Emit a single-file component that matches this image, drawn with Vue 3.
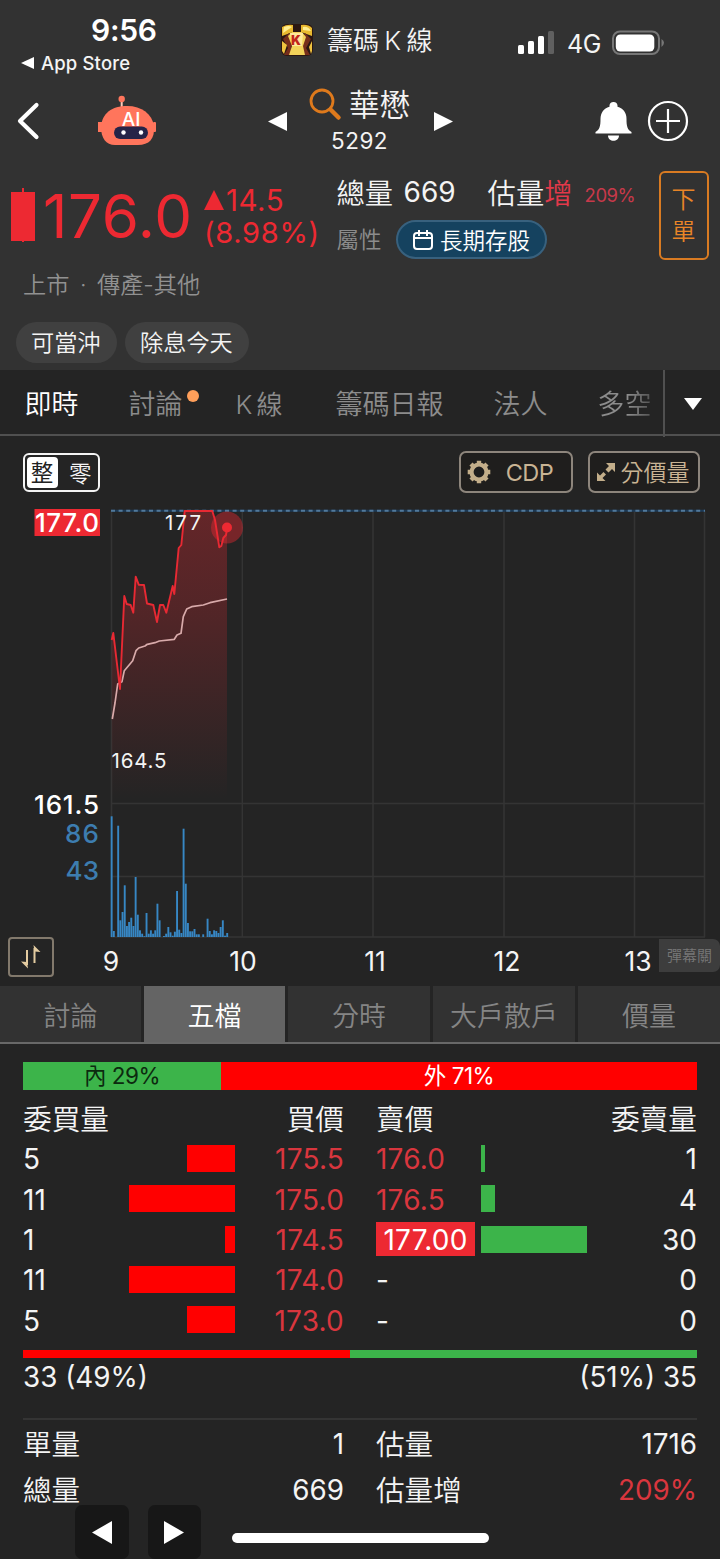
<script setup>
const tabs = [
  { label: '即時', active: true },
  { label: '討論', dot: true },
  { label: 'K 線', latin: true },
  { label: '籌碼日報' },
  { label: '法人' },
  { label: '多空', fade: true },
]

const subTabs = ['討論', '五檔', '分時', '大戶散戶', '價量']

const bids = [
  { qty: 5, price: '175.5', bar: 48 },
  { qty: 11, price: '175.0', bar: 106 },
  { qty: 1, price: '174.5', bar: 10 },
  { qty: 11, price: '174.0', bar: 106 },
  { qty: 5, price: '173.0', bar: 48 },
]

const asks = [
  { qty: 1, price: '176.0', bar: 4 },
  { qty: 4, price: '176.5', bar: 14 },
  { qty: 30, price: '177.00', bar: 106, limit: true },
  { qty: 0, price: '-', bar: 0 },
  { qty: 0, price: '-', bar: 0 },
]

const hours = [
  { x: 111, label: '9' },
  { x: 243, label: '10' },
  { x: 375, label: '11' },
  { x: 507, label: '12' },
  { x: 638, label: '13' },
]

const gridX = [111.5, 242.3, 373, 504, 634.5, 704.5]

const pricePoints = '111.7,640 113.3,633 120,689 124.3,596 126.7,604 130.7,605 133.3,612.7 135.7,576.7 138.7,584.7 144,585 147,603.5 153.3,605 157,622 160,605 163.3,605 166.3,612.7 172.7,586 174.3,594 178.7,548 181.3,545 184.7,511 212.3,511 215,520 219.3,547.3 221.3,546 223.3,538 226,535 227,528'
const averagePoints = '112.3,719 115,703 117.7,684 122,681.7 124.3,670.7 132.7,660.7 136,650.7 138.7,648 145,646 147.3,644.3 155,642.7 159.3,641 174.3,639.3 177,635 181,633.3 183.3,616.7 186.7,609 191.7,606.7 203.3,605 210,602.7 227,599'

// One entry per minute since the open, in pixels.
const volumes = [
  120.7, 6, 0, 111.3, 16.7, 25, 51.7, 11, 15, 19.3, 11, 60, 22.3, 6.7, 3.3, 0.8, 24, 3.3, 6.7, 3.3,
  6.7, 33.3, 16.7, 0, 1, 3.3, 10, 4.7, 1.3, 5.3, 46, 7.3, 4, 108.3, 53.3, 14, 5.7, 5.7, 8, 2.7,
  2.7, 0, 2.7, 0, 18.3, 6, 2.7, 6.7, 6, 4, 10, 16.7, 1.3, 4,
]
</script>

<template>
  <main class="screen">
    <header class="top">
      <section class="status">
        <div class="clock">
          <b>9:56</b>
          <span class="back-app">
            <svg width="13" height="12" viewBox="0 0 13 12"><path d="M0 6 13 0v12z" fill="#fff" /></svg>
            App Store
          </span>
        </div>
        <div class="app-name">
          <svg width="32" height="32" viewBox="0 0 32 32">
            <rect width="32" height="32" rx="6" fill="#2b1712" />
            <path d="M1 3Q6 0 12 1v7L1 12zM20 1q7-1 11 3v8l-11-4z" fill="#e9b92f" />
            <path d="M3 3q5-2 8 0L2 9zM22 3q5-1 8 4l-8-1z" fill="#ffee91" />
            <path d="M2 15l6-6 3 8-1 14H3l4-7zM30 15l-6-6-3 8 1 14h7l-4-7z" fill="#762e1b" />
            <path d="M7 12l4-4h10l4 5-3 9 2 9H8l3-9z" fill="#f3d35a" />
            <path d="M9 9h13l-1 13H11z" fill="#ffe99a" />
            <path d="M1 17l5 4-3 9-2-3zM31 17l-3 6 2 7 1-3z" fill="#f0c33f" />
            <text x="15" y="21" text-anchor="middle" class="icon-k">K</text>
          </svg>
          <span>籌碼 K 線</span>
        </div>
        <div class="signals">
          <svg width="37" height="24" viewBox="0 0 37 24">
            <rect x="0" y="14" width="6" height="9" rx="1.500" fill="#fff" />
            <rect x="10" y="10" width="6" height="13" rx="1.500" fill="#fff" />
            <rect x="20" y="5" width="6" height="18" rx="1.500" fill="#fff" />
            <rect x="30" y="0" width="6" height="23" rx="1.500" fill="#606060" />
          </svg>
          <span>4G</span>
          <svg width="53" height="26" viewBox="0 0 53 26">
            <rect x="1" y="1.500" width="46" height="22.500" rx="7" fill="none" stroke="#777" stroke-width="2" />
            <rect x="3.800" y="4.500" width="38.500" height="17" rx="4.500" fill="#fff" />
            <path d="M49.500 9q5 3.500 0 8z" fill="#777" />
          </svg>
        </div>
      </section>

      <section class="nav">
        <svg class="chevron" width="24" height="40" viewBox="0 0 24 40">
          <path d="M20.500 4 4 20l16.500 16" fill="none" stroke="#fff" stroke-width="4.200" stroke-linecap="round" stroke-linejoin="round" />
        </svg>
        <svg class="robot" width="58" height="52" viewBox="0 0 58 52">
          <path d="M23.700 5v9" stroke="#ffc9b7" stroke-width="2" />
          <circle cx="23.700" cy="4" r="3.200" fill="#ff755c" />
          <rect x="0" y="27" width="6" height="10" fill="#ff755c" />
          <rect x="55" y="27" width="3" height="10" rx="1" fill="#ff755c" />
          <path d="M3 32C4 18 14 11 29 11s25 8 27 20c1 13-5 19-16 19H17C8 50 3 43 3 32z" fill="#ff755c" />
          <rect x="16" y="31.500" width="34" height="12.500" rx="6.200" fill="#252448" />
          <circle cx="25.500" cy="37.500" r="2.200" fill="#fff" />
          <circle cx="43" cy="37.500" r="2.200" fill="#fff" />
          <text x="33" y="30.500" text-anchor="middle" class="robot-text">AI</text>
        </svg>
        <svg class="prev" width="19" height="19" viewBox="0 0 19 19"><path d="M0 9.500 19 0v19z" fill="#fff" /></svg>
        <div class="stock">
          <div class="stock-name">
            <svg width="34" height="34" viewBox="0 0 34 34">
              <circle cx="13" cy="13" r="11" fill="none" stroke="#df7a1c" stroke-width="2.800" />
              <path d="m21.500 21.500 8 8" stroke="#df7a1c" stroke-width="4.500" stroke-linecap="round" />
            </svg>
            <span>華懋</span>
          </div>
          <div class="stock-code">5292</div>
        </div>
        <svg class="next" width="19" height="19" viewBox="0 0 19 19"><path d="M19 9.500 0 0v19z" fill="#fff" /></svg>
        <svg class="bell" width="37" height="40" viewBox="0 0 37 40">
          <path d="M18.500 1c-2.500 0-4 1.600-4 3.600v1.200C8.500 7.500 5.500 12 5.500 18c0 7-.8 10.500-5 13v1.500h36V31c-4.200-2.500-5-6-5-13 0-6-3-10.500-9-12.200V4.600c0-2-1.500-3.600-4-3.600zM13 34.500h11c0 7-11 7-11 0z" fill="#fff" />
        </svg>
        <svg class="plus" width="42" height="42" viewBox="0 0 42 42">
          <circle cx="21" cy="21" r="19" fill="none" stroke="#fff" stroke-width="2.200" />
          <path d="M21 9v24M9 21h24" stroke="#fff" stroke-width="2.200" />
        </svg>
      </section>

      <section class="quote">
        <div class="price-block">
          <div class="price-line">
            <svg width="25" height="56" viewBox="0 0 25 56"><path d="M0 5h24v49H0zM11 1h2v54h-2z" fill="#ed2932" /></svg>
            <span class="last">176.0</span>
            <div class="change">
              <div class="change-top">
                <svg width="20" height="20" viewBox="0 0 20 20"><path d="M10 0 20 20H0z" fill="#ed2932" /></svg>
                <span>14.5</span>
              </div>
              <div class="change-pct">(8.98%)</div>
            </div>
          </div>
          <div class="market">上市 <i>·</i> 傳產-其他</div>
        </div>
        <div class="volume-block">
          <div class="volume-line">
            <span>總量</span><span class="num">669</span><span class="est">估量<em>增</em></span><small>209%</small>
          </div>
          <div class="attr-line">
            <span>屬性</span>
            <div class="pill">
              <svg width="20" height="20" viewBox="0 0 20 20" fill="none" stroke="#fff" stroke-width="2">
                <rect x="1" y="3" width="18" height="16" rx="3" /><path d="M1 8h18M6 0v6M14 0v6" />
              </svg>
              <span>長期存股</span>
            </div>
          </div>
        </div>
        <button class="order"><span>下</span><span>單</span></button>
      </section>

      <div class="tags"><span>可當沖</span><span>除息今天</span></div>
    </header>

    <nav class="tabs">
      <span v-for="t in tabs" :key="t.label" :class="{ active: t.active, fade: t.fade, latin: t.latin }">{{ t.label }}<i v-if="t.dot" class="dot"></i></span>
      <div class="more"><svg width="18" height="12" viewBox="0 0 18 12"><path d="M0 0h18L9 12z" fill="#fff" /></svg></div>
    </nav>

    <section class="chart">
      <div class="controls">
        <div class="lot"><b>整</b><span>零</span></div>
        <button class="tool cdp">
          <svg width="24" height="24" viewBox="0 0 24 24">
            <circle cx="12" cy="12" r="7.500" fill="none" stroke="#c3ae8a" stroke-width="4.200" />
            <path d="M12 .7v4M12 19.300v4M.7 12h4M19.300 12h4M4 4l3 3M17 17l3 3M20 4l-3 3M7 17l-3 3" stroke="#c3ae8a" stroke-width="4.400" />
          </svg>
          <span>CDP</span>
        </button>
        <button class="tool split">
          <svg width="20" height="20" viewBox="0 0 20 20">
            <path d="M10 1h9v9l-3-3-3.500 3.500-3-3L13 4zM1 10.500l3 3L7.500 10l2.500 2.500L6.500 16l3 3H1z" fill="#c3ae8a" />
          </svg>
          <span>分價量</span>
        </button>
      </div>

      <svg class="plot" width="720" height="486" viewBox="0 500 720 486">
        <defs>
          <linearGradient id="area" x1="0" y1="511" x2="0" y2="800" gradientUnits="userSpaceOnUse">
            <stop offset="0" stop-color="#ed2932" stop-opacity=".32" />
            <stop offset=".35" stop-color="#ed2932" stop-opacity=".23" />
            <stop offset="1" stop-color="#ed2932" stop-opacity="0" />
          </linearGradient>
        </defs>
        <g stroke="#343434" stroke-width="1.500">
          <path v-for="x in gridX" :key="x" :d="`M${x} 511V937`" />
          <path d="M111 803.500h594M111 876.500h594M111 937h594" />
        </g>
        <path d="M111 510.800h594" stroke="#1c3a56" stroke-width="2" />
        <path d="M111 510.800h594" stroke="#52799b" stroke-width="2" stroke-dasharray="4 3.600" />
        <polygon :points="`111.700,800 ${pricePoints} 227,800`" fill="url(#area)" />
        <polyline :points="averagePoints" fill="none" stroke="#d8aaaa" stroke-width="1.700" stroke-linejoin="round" />
        <polyline :points="pricePoints" fill="none" stroke="#e82933" stroke-width="1.900" stroke-linejoin="round" />
        <circle cx="227" cy="527.500" r="16" fill="#ed2932" fill-opacity=".42" />
        <circle cx="227" cy="527.500" r="5" fill="#ed2932" />
        <g fill="#3787c4">
          <rect v-for="(v, i) in volumes" :key="i" :x="110.700 + i * 2.180" :y="937 - v" width="1.900" :height="v" />
        </g>
        <rect x="34.500" y="509" width="65.500" height="27" fill="#ed2932" />
        <g class="axis" text-anchor="end">
          <text x="99" y="532" textLength="64">177.0</text>
          <text x="99" y="813.500" textLength="65">161.5</text>
          <text x="99" y="842.500" textLength="34" fill="#3d7db0">86</text>
          <text x="99" y="880" textLength="33.500" fill="#3d7db0">43</text>
        </g>
        <g class="marks">
          <text x="165" y="529.500" textLength="36">177</text>
          <text x="111.500" y="767.500" textLength="55">164.5</text>
        </g>
        <g class="hours" text-anchor="middle">
          <text v-for="h in hours" :key="h.label" :x="h.x" y="970.500">{{ h.label }}</text>
        </g>
      </svg>
      <button class="swap">
        <svg width="22" height="24" viewBox="0 0 22 24" fill="none" stroke="#e3cba0" stroke-width="2">
          <path d="M7 5v15M14.500 18V3" /><path d="M8 23.500 1 16.500l6 .5zM13.500 0 20.500 7l-6-.5z" fill="#e3cba0" stroke="none" />
        </svg>
      </button>
      <span class="danmu">彈幕關</span>
    </section>

    <nav class="sub-tabs">
      <span v-for="(t, i) in subTabs" :key="t" :class="{ active: i === 1 }">{{ t }}</span>
    </nav>

    <section class="book">
      <div class="ratio"><div class="inner">內 29%</div><div class="outer">外 71%</div></div>
      <div class="depth">
        <div class="side bid">
          <div class="row cjk"><span>委買量</span><span>買價</span></div>
          <div v-for="(b, i) in bids" :key="i" class="row">
            <span class="qty">{{ b.qty }}</span>
            <div class="track"><i :style="{ width: b.bar + 'px' }"></i></div>
            <span class="px">{{ b.price }}</span>
          </div>
        </div>
        <div class="side ask">
          <div class="row cjk"><span>賣價</span><span>委賣量</span></div>
          <div v-for="(a, i) in asks" :key="i" class="row">
            <span class="px" :class="{ limit: a.limit, none: a.price === '-' }">{{ a.price }}</span>
            <div class="track"><i :style="{ width: a.bar + 'px' }"></i></div>
            <span class="qty">{{ a.qty }}</span>
          </div>
        </div>
      </div>
      <div class="total-bar"><i></i><b></b></div>
      <div class="totals"><span>33 (49%)</span><span>(51%) 35</span></div>
      <div class="stats">
        <div><span>單量</span><b>1</b></div>
        <div><span>估量</span><b>1716</b></div>
        <div><span>總量</span><b>669</b></div>
        <div><span>估量增</span><b class="red">209%</b></div>
      </div>
    </section>

    <footer class="bottom">
      <button><svg width="20" height="23" viewBox="0 0 20 23"><path d="M0 11.500 20 0v23z" fill="#fff" /></svg></button>
      <button><svg width="20" height="23" viewBox="0 0 20 23"><path d="M20 11.500 0 0v23z" fill="#fff" /></svg></button>
      <i class="home"></i>
    </footer>
  </main>
</template>

<style>
body { background: #242424; }
</style>

<style scoped>
* { box-sizing: border-box; }
.screen {
  width: 720px; height: 1559px; overflow: hidden; display: flex; flex-direction: column;
  background: #242424; color: #f4f4f4; font-family: Inter, "Noto Sans CJK TC", sans-serif;
  font-weight: 400; white-space: nowrap;
}
button { padding: 0; border: 0; background: none; color: inherit; font: inherit; }
i, em { font-style: normal; }
svg { display: block; flex: none; }
.top { height: 370px; background: #323232; flex: none; }
.app-name, .stock-name, .market, .volume-line, .attr-line, .order, .tags, .tabs, .lot, .split, .danmu, .sub-tabs, .row.cjk, .stats span { font-weight: 350; }

.status { height: 80px; display: grid; grid-template-columns: 281px 237px 1fr; }
.clock { padding-top: 12px; }
.clock b { display: block; margin-left: 91px; font-size: 30px; line-height: 37px; font-weight: 600; letter-spacing: -0.3px; color: #fff; }
.back-app { display: flex; align-items: center; gap: 7px; margin-left: 21px; height: 28px; font-size: 18.5px; font-weight: 500; letter-spacing: 0.15px; }
.app-name { display: flex; align-items: center; gap: 14px; font-size: 26px; word-spacing: -2px; }
.app-name span { margin-top: -4px; }
.icon-k { font: 900 13px Inter, sans-serif; fill: #c2261c; }
.signals { display: flex; align-items: center; padding-top: 5px; font-size: 25px; font-weight: 400; }
.signals span { width: 45px; margin: 2px 0 0 12px; letter-spacing: -0.3px; }

.nav { height: 80px; display: flex; align-items: center; }
.chevron { margin: 2px 0 0 16px; }
.robot { margin: 1px 0 0 58px; }
.robot-text { font: 500 19px Inter, sans-serif; fill: #fff; }
.prev { margin: 2px 0 0 112px; }
.stock { width: 147px; padding-left: 22px; }
.stock-name { display: flex; align-items: center; gap: 6px; height: 46px; font-size: 30.5px; }
.stock-name span { margin-top: -5px; }
.stock-code { margin-left: 22px; height: 30px; line-height: 26px; font-size: 22.5px; letter-spacing: 0.5px; }
.next { margin-top: 2px; }
.bell { margin-left: 142px; margin-top: 2px; }
.plus { margin-left: 15px; margin-top: 1px; }

.quote { height: 162px; display: grid; grid-template-columns: 336.5px 322px 50px; }
.price-block { padding: 27px 0 0 11px; }
.price-line { display: flex; align-items: flex-start; color: #ed2932; height: 62px; }
.last { width: 161px; margin-left: 7px; font-size: 60px; line-height: 58px; letter-spacing: 0.7px; }
.change-top { display: flex; align-items: center; gap: 2px; height: 25px; font-size: 29.5px; letter-spacing: 0.5px; }
.change { width: 120px; font-size: 29px; }
.change-pct { line-height: 42px; letter-spacing: 0.7px; }
.market { margin: 20px 0 0 12px; line-height: 32px; font-size: 23.2px; color: #919191; }
.market i { margin: 0 4px; }
.volume-line { display: flex; align-items: center; height: 32px; margin-top: 15px; font-size: 28.3px; }
.num { width: 84px; margin-left: 10.5px; font-size: 28px; font-weight: 400; padding-top: 1px; }
.est { width: 97px; }
.est em { color: #e2394a; }
.volume-line small { color: #c8394a; font-size: 18.5px; padding-top: 7px; font-weight: 400; letter-spacing: -0.5px; }
.attr-line { display: flex; align-items: center; margin-top: 13px; font-size: 22.5px; color: #8c8c8c; }
.attr-line > span { margin-top: -3px; }
.pill { width: 151px; height: 39px; margin-left: 14.5px; border: 2px solid #38617e; border-radius: 20px; background: #15425f; color: #fff; display: flex; align-items: center; justify-content: center; gap: 7px; }
.pill span { margin-top: -2px; }
.order { width: 50px; height: 89px; margin-top: 11px; border: 2px solid #d97b22; border-radius: 6px; color: #e88527; display: flex; flex-direction: column; align-items: center; justify-content: center; font-size: 24px; line-height: 32px; }
.tags { display: flex; gap: 8px; padding-left: 16px; }
.tags span { height: 41px; padding: 0 16.5px 0 15px; border-radius: 21px; background: #404040; font-size: 23.2px; line-height: 42px; }

.tabs { flex: none; height: 66px; display: grid; grid-template-columns: 104px 107px 100px 158px 104px 65.5px 1fr; padding-left: 24.5px; border-bottom: 2px solid #505050; font-size: 27px; line-height: 64px; color: #8c8c8c; }
.tabs .active { color: #fff; }
.tabs span { display: flex; padding-top: 3px; }
.latin { font-size: 26px; letter-spacing: -0.6px; word-spacing: -2px; }
.fade { width: 60px; background: linear-gradient(90deg, #8c8c8c 50%, #4a4a4a 95%); background-clip: text; -webkit-background-clip: text; color: transparent; }
.dot { width: 12px; height: 12px; margin: 17px 0 0 4px; border-radius: 50%; background: #ff9f5a; }
.more { display: grid; place-items: center; border-left: 2px solid #505050; padding-left: 1px; }

.chart { flex: none; position: relative; height: 550px; }
.controls { height: 64px; display: flex; padding: 15px 20px 0 23px; }
.lot { display: flex; align-items: center; width: 77px; height: 39px; margin-top: 2px; border: 2px solid #f4f4f4; border-radius: 6px; padding-left: 2px; font-size: 22.5px; }
.lot b { width: 31px; height: 31px; line-height: 31px; border-radius: 4px; background: #fff; color: #222; text-align: center; font-weight: 400; text-indent: -1px; }
.lot span { margin: -2px 0 0 11px; }
.tool { height: 42px; display: flex; align-items: center; border: 2px solid #8d857c; border-radius: 7px; background: #1f1e1d; color: #c9b494; font-size: 24px; }
.cdp { width: 115px; margin-left: 359px; padding-left: 6px; gap: 15px; }
.cdp span { font-size: 23.5px; letter-spacing: -0.6px; }
.split { width: 112px; margin-left: 15px; padding-left: 6px; gap: 4px; font-size: 23px; }
.split span { margin-top: -2px; }
.plot { font-family: Inter, sans-serif; fill: none; }
.axis { font-size: 26px; font-weight: 500; fill: #fff; }
.marks { font-size: 20.5px; fill: #f4f4f4; }
.hours { font-size: 26.5px; fill: #f4f4f4; }
.swap { position: absolute; left: 8px; top: 501px; width: 46px; height: 40px; border: 2px solid #82796c; border-radius: 4px; display: grid; place-items: center; }
.danmu { position: absolute; left: 659px; top: 503px; width: 61px; height: 33px; border-radius: 0 7px 7px 0; background: #3d3d3d; color: #777; font-size: 15px; line-height: 33px; text-align: center; }

.sub-tabs { flex: none; height: 58px; display: grid; grid-template-columns: 141px 141px 142px 142px 142px; gap: 3px; border-bottom: 2px solid #686868; font-size: 27px; line-height: 56px; text-align: center; color: #858585; }
.sub-tabs span { background: #323232; padding-top: 3px; height: 56px; }
.sub-tabs .active { background: #646464; color: #fff; }

.book { flex: none; height: 458px; padding: 18px 23px 0; font-size: 28px; }
.ratio { display: flex; height: 28px; line-height: 28px; font-size: 22.5px; text-align: center; letter-spacing: -0.5px; }
.inner { width: 198px; background: #3cb44a; color: #0c2a0f; }
.outer { flex: 1; background: #f00; color: #fff; }
.depth { display: grid; grid-template-columns: 321px 321px; column-gap: 32px; padding-top: 8px; }
.row { display: flex; align-items: center; height: 40.3px; }
.row.cjk { justify-content: space-between; font-size: 28.7px; padding-bottom: 2px; }
.qty, .px { padding-top: 2px; }
.side .qty { width: 92px; }
.bid .track { width: 120px; display: flex; justify-content: flex-end; }
.track i { height: 27px; background: #f00; }
.px { color: #d9363e; letter-spacing: 0.2px; }
.bid .px { width: 109px; text-align: right; }
.ask .px { width: 105px; }
.ask .track { flex: 1; display: flex; }
.ask .track i { background: #3cb44a; }
.ask .qty { text-align: right; }
.ask .limit { width: 99px; height: 34px; margin-right: 6px; padding-top: 0; line-height: 36px; background: #ed2932; color: #fff; text-align: center; }
.ask .none { color: #f4f4f4; }
.total-bar { display: flex; height: 8px; margin-top: 10px; }
.total-bar i { width: 327px; background: #f00; }
.total-bar b { flex: 1; background: #3cb44a; }
.totals { display: flex; justify-content: space-between; height: 60px; line-height: 39px; font-size: 27.8px; }
.stats { display: grid; grid-template-columns: 321px 321px; column-gap: 32px; border-top: 2px solid #343434; padding-top: 2px; }
.stats div { display: flex; justify-content: space-between; height: 46px; line-height: 45px; font-size: 28.6px; }
.stats b { font-weight: 400; font-size: 27.8px; }
.stats .red { color: #d9363e; }

.bottom { flex: 1; display: flex; align-items: flex-end; padding-left: 75px; gap: 19px; }
.bottom button { width: 53.5px; height: 54px; border-radius: 7px; background: #171717; display: grid; place-items: center; }
.home { width: 257px; height: 10px; margin: 0 0 16px 12px; border-radius: 5px; background: #fff; }
</style>
